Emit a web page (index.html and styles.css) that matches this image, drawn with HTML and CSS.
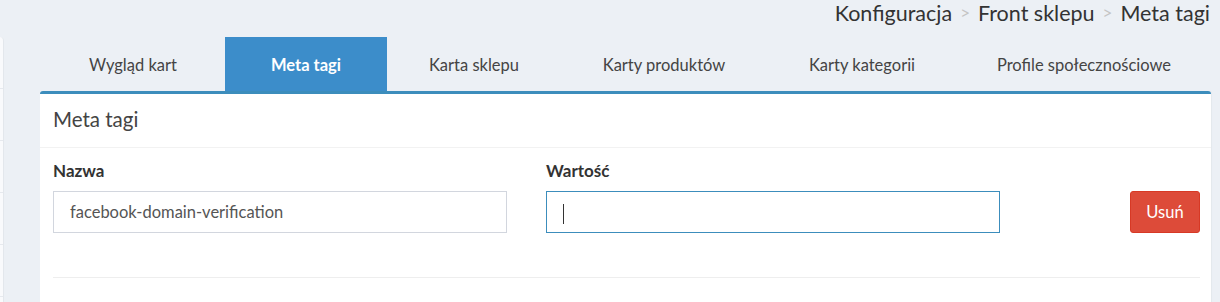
FILE: index.html
```html
<!DOCTYPE html>
<html lang="pl">
<head>
    <meta charset="UTF-8">
    <title>Meta tagi</title>
    <link rel="stylesheet" href="styles.css">
</head>
<body>

<div class="breadcrumb">
    <span>Konfiguracja</span>
    <span class="sep">&gt;</span>
    <span>Front sklepu</span>
    <span class="sep">&gt;</span>
    <span>Meta tagi</span>
</div>

<div class="page">
    <!-- sidebar edge -->
    <div class="side">
        <div class="side-row"></div>
        <div class="side-row"></div>
        <div class="side-row"></div>
        <div class="side-row"></div>
        <div class="side-row"></div>
    </div>

    <div class="main">
        <ul class="tabs">
            <li>Wygląd kart</li>
            <li class="active">Meta tagi</li>
            <li>Karta sklepu</li>
            <li>Karty produktów</li>
            <li>Karty kategorii</li>
            <li>Profile społecznościowe</li>
        </ul>

        <div class="box">
            <div class="box-header">Meta tagi</div>
            <div class="box-body">
                <div class="meta-row">
                    <div class="field">
                        <label>Nazwa</label>
                        <div class="input">facebook-domain-verification</div>
                    </div>
                    <div class="field">
                        <label>Wartość</label>
                        <div class="input focus"><span class="caret"></span></div>
                    </div>
                    <div class="action">
                        <button class="btn-danger">Usuń</button>
                    </div>
                </div>
                <hr>
            </div>
        </div>
    </div>
</div>

</body>
</html>
```

FILE: styles.css
```css
body {
    font-family: Lato, "Liberation Sans", sans-serif;
    background: #ecf0f5;
    color: #333;
    margin: 0;
    padding: 0;
    overflow: hidden;
}
.breadcrumb {
    display: flex;
    justify-content: flex-end;
    gap: 8px;
    height: 37px;
    padding: 0 10px 0 0;
    font-size: 21.5px;
    line-height: 26px;
    color: #333;
}
.breadcrumb .sep {
    color: #c4c4c4;
    font-size: 17px;
}
.page {
    display: flex;
}
.side {
    width: 3px;
    height: 265px;
    background: #f9fafc;
    border-right: 1px solid #e3e7ec;
    border-top-right-radius: 4px;
    margin-right: 36px;
}
.side-row {
    height: 51px;
    border-bottom: 1px solid #e6e9ee;
}
.main {
    flex: 1;
    margin-right: 9px;
}
.tabs {
    display: grid;
    grid-template-columns: 184fr 162fr 174fr 206fr 190fr 254fr;
    list-style: none;
    margin: 0;
    padding: 0 0 0 1px;
}
.tabs li {
    text-align: center;
    height: 54px;
    line-height: 56px;
    font-size: 16.5px;
    color: #444;
}
.tabs li.active {
    background: #3c8dca;
    color: #fff;
    font-weight: bold;
}
.box {
    background: #fff;
    border-top: 3px solid #3c8dbc;
    border-top-left-radius: 3px;
    border-top-right-radius: 3px;
    box-shadow: 1px 0 1px #e4e8ed;
    height: 220px;
}
.box-header {
    padding: 0 13px;
    height: 53px;
    line-height: 50px;
    font-size: 20.5px;
    color: #444;
    border-bottom: 1px solid #f2f2f2;
}
.box-body {
    padding: 13px 11px 0 13px;
}
.meta-row {
    display: flex;
    gap: 39px;
}
.field {
    width: 454px;
}
.field label {
    display: block;
    font-weight: bold;
    font-size: 17px;
    line-height: 20px;
    margin-bottom: 10px;
    color: #333;
}
.input {
    box-sizing: border-box;
    height: 42px;
    border: 1px solid #d2d6de;
    padding: 0 16px;
    font-size: 16.5px;
    line-height: 40px;
    color: #555;
}
.input.focus {
    border-color: #3c8dbc;
}
.caret {
    display: inline-block;
    width: 1px;
    height: 20px;
    background: #333;
    vertical-align: middle;
}
.action {
    flex: 1;
    display: flex;
    justify-content: flex-end;
    padding-top: 30px;
}
.btn-danger {
    height: 42px;
    width: 70px;
    background: #dd4b39;
    border: 1px solid #d73925;
    border-radius: 3px;
    color: #fff;
    font-family: inherit;
    font-size: 16.5px;
}
hr {
    border: 0;
    border-top: 1px solid #eee;
    margin: 44px 0 0;
}
```
